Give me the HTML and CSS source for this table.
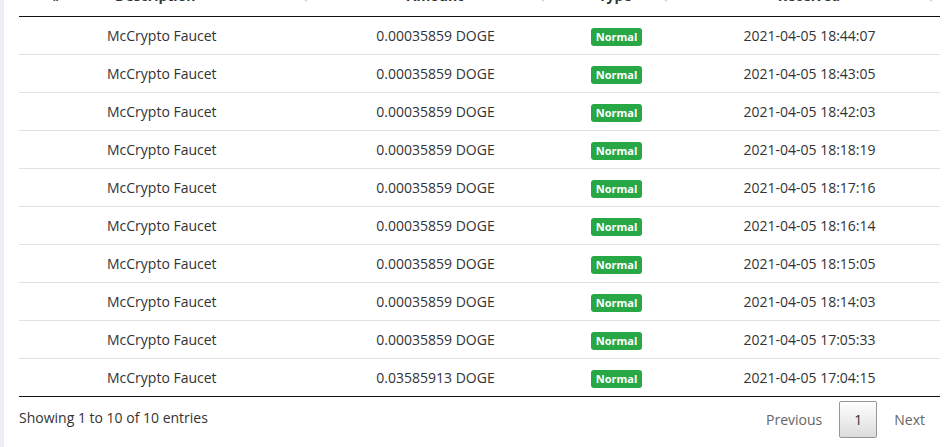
FILE: index.html
```html
<!DOCTYPE html>
<html lang="en">
<head>
  <meta charset="UTF-8" />
  <meta name="viewport" content="width=device-width, initial-scale=1.0"/>
  <title>Faucet History</title>
  <link rel="stylesheet" href="styles.css">
</head>
<body>
  <div class="page">
    <div class="card">
      <table class="history-table">
        <colgroup>
          <col class="col-id">
          <col class="col-desc">
          <col class="col-amount">
          <col class="col-type">
          <col class="col-date">
        </colgroup>
        <thead>
          <tr>
            <th class="id-head">#</th>
            <th class="desc sortable">Description</th>
            <th class="sortable">Amount</th>
            <th class="sortable">Type</th>
            <th class="sortable">Received</th>
          </tr>
        </thead>
        <tbody>
          <tr><td></td><td class="desc">McCrypto Faucet</td><td>0.00035859 DOGE</td><td class="type"><span class="badge">Normal</span></td><td>2021-04-05 18:44:07</td></tr>
          <tr><td></td><td class="desc">McCrypto Faucet</td><td>0.00035859 DOGE</td><td class="type"><span class="badge">Normal</span></td><td>2021-04-05 18:43:05</td></tr>
          <tr><td></td><td class="desc">McCrypto Faucet</td><td>0.00035859 DOGE</td><td class="type"><span class="badge">Normal</span></td><td>2021-04-05 18:42:03</td></tr>
          <tr><td></td><td class="desc">McCrypto Faucet</td><td>0.00035859 DOGE</td><td class="type"><span class="badge">Normal</span></td><td>2021-04-05 18:18:19</td></tr>
          <tr><td></td><td class="desc">McCrypto Faucet</td><td>0.00035859 DOGE</td><td class="type"><span class="badge">Normal</span></td><td>2021-04-05 18:17:16</td></tr>
          <tr><td></td><td class="desc">McCrypto Faucet</td><td>0.00035859 DOGE</td><td class="type"><span class="badge">Normal</span></td><td>2021-04-05 18:16:14</td></tr>
          <tr><td></td><td class="desc">McCrypto Faucet</td><td>0.00035859 DOGE</td><td class="type"><span class="badge">Normal</span></td><td>2021-04-05 18:15:05</td></tr>
          <tr><td></td><td class="desc">McCrypto Faucet</td><td>0.00035859 DOGE</td><td class="type"><span class="badge">Normal</span></td><td>2021-04-05 18:14:03</td></tr>
          <tr><td></td><td class="desc">McCrypto Faucet</td><td>0.00035859 DOGE</td><td class="type"><span class="badge">Normal</span></td><td>2021-04-05 17:05:33</td></tr>
          <tr><td></td><td class="desc">McCrypto Faucet</td><td>0.03585913 DOGE</td><td class="type"><span class="badge">Normal</span></td><td>2021-04-05 17:04:15</td></tr>
        </tbody>
      </table>
      <div class="table-footer">
        <div class="table-info">Showing 1 to 10 of 10 entries</div>
        <div class="pagination">
          <a class="page-btn disabled">Previous</a>
          <a class="page-btn current">1</a>
          <a class="page-btn disabled">Next</a>
        </div>
      </div>
    </div>
  </div>
</body>
</html>
```

FILE: styles.css
```css
body {
  margin: 0;
  font-family: "Open Sans", Arial, sans-serif;
  font-size: 14px;
  line-height: 21px;
  color: #333;
  background-color: #eceff3;
  overflow: hidden;
}

.page {
  padding-left: 4px;
}

.card {
  background-color: #fff;
  margin-top: -25px;
  padding: 0 9px 0 15px;
  min-height: 480px;
}

.history-table {
  width: 100%;
  table-layout: fixed;
  border-collapse: collapse;
  border-bottom: 1px solid #111;
}

.col-id { width: 72px; }
.col-desc { width: 224px; }
.col-amount { width: 237px; }
.col-type { width: 123px; }
.col-date { width: 265px; }

.history-table th {
  position: relative;
  font-weight: 700;
  text-align: center;
  padding: 10px 9px 10px 12px;
  border-bottom: 1px solid #111;
  color: #333;
}

.history-table th.desc {
  text-align: left;
  padding-left: 24px;
}

.sortable::after {
  content: "";
  position: absolute;
  right: 6px;
  top: 50%;
  margin-top: 2px;
  border-left: 3px solid transparent;
  border-right: 3px solid transparent;
  border-top: 4px solid #d6d6d6;
}

.sortable::before {
  content: "";
  position: absolute;
  right: 6px;
  top: 50%;
  margin-top: -5px;
  border-left: 3px solid transparent;
  border-right: 3px solid transparent;
  border-bottom: 4px solid #d6d6d6;
}

.history-table td {
  text-align: center;
  padding: 8px 9px 8px 13px;
  border-bottom: 1px solid #dee2e6;
  white-space: nowrap;
}

.history-table tbody tr:last-child td {
  border-bottom: none;
}

.history-table td.desc {
  text-align: left;
  padding-left: 16px;
}

.history-table td.type {
  padding-left: 15px;
}

.badge {
  display: inline-block;
  background-color: #28a745;
  color: #fff;
  font-size: 11px;
  font-weight: 700;
  line-height: 14px;
  padding: 2px 5px;
  border-radius: 3px;
}

.table-footer {
  display: flex;
  justify-content: space-between;
  align-items: flex-start;
}

.table-info {
  padding-top: 10px;
}

.pagination {
  display: flex;
  padding-top: 4px;
}

.page-btn {
  padding: 7px 14px;
  margin-left: 2px;
  border: 1px solid transparent;
  border-radius: 2px;
  cursor: pointer;
}

.page-btn.disabled {
  color: #666;
  cursor: default;
}

.page-btn.current {
  color: #333;
  border-color: #979797;
  background: linear-gradient(to bottom, #fff 0%, #dcdcdc 100%);
}
```
